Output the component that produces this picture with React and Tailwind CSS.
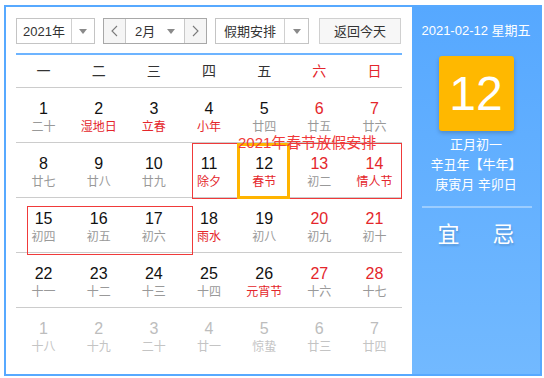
import React from "react";

const RED = "text-[#e4262b]";

const rows = [
  [
    ["1", "二十", "n", "g"],
    ["2", "湿地日", "n", "r"],
    ["3", "立春", "n", "r"],
    ["4", "小年", "n", "r"],
    ["5", "廿四", "n", "g"],
    ["6", "廿五", "r", "g"],
    ["7", "廿六", "r", "g"],
  ],
  [
    ["8", "廿七", "n", "g"],
    ["9", "廿八", "n", "g"],
    ["10", "廿九", "n", "g"],
    ["11", "除夕", "n", "r"],
    ["12", "春节", "n", "r"],
    ["13", "初二", "r", "g"],
    ["14", "情人节", "r", "r"],
  ],
  [
    ["15", "初四", "n", "g"],
    ["16", "初五", "n", "g"],
    ["17", "初六", "n", "g"],
    ["18", "雨水", "n", "r"],
    ["19", "初八", "n", "g"],
    ["20", "初九", "r", "g"],
    ["21", "初十", "r", "g"],
  ],
  [
    ["22", "十一", "n", "g"],
    ["23", "十二", "n", "g"],
    ["24", "十三", "n", "g"],
    ["25", "十四", "n", "g"],
    ["26", "元宵节", "n", "r"],
    ["27", "十六", "r", "g"],
    ["28", "十七", "r", "g"],
  ],
  [
    ["1", "十八", "l", "l"],
    ["2", "十九", "l", "l"],
    ["3", "二十", "l", "l"],
    ["4", "廿一", "l", "l"],
    ["5", "惊蛰", "l", "l"],
    ["6", "廿三", "l", "l"],
    ["7", "廿四", "l", "l"],
  ],
];

const numCls = { n: "text-[#111]", r: RED, l: "text-[#bdbdbd]" };
const lunCls = { g: "text-[#999]", r: RED, l: "text-[#c4c4c4]" };

function Caret() {
  return (
    <svg width="8" height="5" viewBox="0 0 8 5">
      <path d="M0 0 L8 0 L4 5 Z" fill="#8a8a8a" />
    </svg>
  );
}

function Chevron({ dir }) {
  return (
    <svg width="7" height="12" viewBox="0 0 7 12">
      <path
        d={dir === "l" ? "M6 1 L1 6 L6 11" : "M1 1 L6 6 L1 11"}
        fill="none"
        stroke="#7a7a7a"
        strokeWidth="1.1"
      />
    </svg>
  );
}

export default function App() {
  return (
    <div
      className="w-[544px] h-[378px] bg-white pt-[5px] pl-[4px]"
      style={{ fontFamily: '"Liberation Sans", "Noto Sans CJK SC", sans-serif' }}
    >
      <div className="flex w-[538px] h-[371px] border-2 border-[#57a9ff]">
        {/* left */}
        <div className="relative w-[406px] px-[10px] pt-[11px]">
          <div className="flex h-[26px] text-[13px] text-[#333]">
            <div className="flex w-[79px] border border-[#c4c4c4]">
              <div className="flex-1 flex items-center justify-center leading-none">2021年</div>
              <div className="w-[23px] border-l border-[#d0d0d0] flex items-center justify-center">
                <Caret />
              </div>
            </div>
            <div className="ml-[8px] flex w-[104px] border border-[#a8a8a8]">
              <div className="w-[22px] bg-[#f5f5f5] border-r border-[#c8c8c8] flex items-center justify-center">
                <Chevron dir="l" />
              </div>
              <div className="flex-1 flex items-center bg-white">
                <span className="ml-[9px] leading-none">2月</span>
                <span className="ml-auto mr-[9px] flex">
                  <Caret />
                </span>
              </div>
              <div className="w-[22px] bg-[#f5f5f5] border-l border-[#c8c8c8] flex items-center justify-center">
                <Chevron dir="r" />
              </div>
            </div>
            <div className="ml-[8px] flex w-[94px] border border-[#c4c4c4]">
              <div className="flex-1 flex items-center justify-center leading-none">假期安排</div>
              <div className="w-[24px] border-l border-[#d0d0d0] flex items-center justify-center">
                <Caret />
              </div>
            </div>
            <div className="ml-[10px] w-[82px] border border-[#d0d0d0] bg-[#f7f7f7] flex items-center justify-center leading-none">
              返回今天
            </div>
          </div>

          <div className="mt-[9px] h-[2px] bg-[#6db4ff]" />

          <div className="grid grid-cols-7 h-[33px] border-b border-[#cccccc] text-[14px] text-[#333]">
            {["一", "二", "三", "四", "五", "六", "日"].map((d, i) => (
              <div
                key={d}
                className={`flex items-center justify-center ${i >= 5 ? RED : ""}`}
              >
                {d}
              </div>
            ))}
          </div>

          {rows.map((row, ri) => (
            <div
              key={ri}
              className={`grid grid-cols-7 h-[55px] ${ri < 4 ? "border-b border-[#cccccc]" : ""}`}
            >
              {row.map(([n, l, nc, lc], ci) => (
                <div key={ci} className="flex flex-col items-center pt-[11px]">
                  <div className={`text-[16px] leading-[20px] ${numCls[nc]}`}>{n}</div>
                  <div className={`text-[12px] leading-[16px] ${lunCls[lc]}`}>{l}</div>
                </div>
              ))}
            </div>
          ))}

          {/* overlays */}
          <div className="absolute left-[186px] top-[136px] w-[210px] h-[56px] border border-[#f03a3a]" />
          <div className="absolute left-[21px] top-[199px] w-[166px] h-[49px] border border-[#f03a3a]" />
          <div className="absolute left-[231px] top-[136px] w-[53px] h-[56px] border-[3px] border-[#ffb400]" />
          <div className="absolute left-[232px] top-[126px] text-[15px] leading-[20px] text-[#f03a3a] whitespace-nowrap">
            2021年春节放假安排
          </div>
        </div>

        {/* right panel */}
        <div className="w-[128px] bg-gradient-to-b from-[#56a8ff] to-[#72b9ff] text-white flex flex-col items-center pt-[15px]">
          <div className="text-[13px] leading-[18px] whitespace-nowrap">2021-02-12 星期五</div>
          <div className="mt-[16px] w-[75px] h-[75px] rounded-[3px] bg-[#ffb800] shadow-[0_2px_4px_rgba(0,0,0,0.2)] flex items-center justify-center text-[48px] leading-none">
            12
          </div>
          <div className="mt-[4px] text-[13px] leading-[20px] text-center whitespace-nowrap">
            <div>正月初一</div>
            <div>辛丑年【牛年】</div>
            <div>庚寅月 辛卯日</div>
          </div>
          <div className="mt-[11px] ml-[2px] w-[110px] h-[2px] bg-[#9ccdff]" />
          <div className="mt-[12px] flex gap-[33px] text-[22px] leading-[30px] font-normal [text-shadow:1px_2px_2px_rgba(0,0,0,0.15)]">
            <span>宜</span>
            <span>忌</span>
          </div>
        </div>
      </div>
    </div>
  );
}
